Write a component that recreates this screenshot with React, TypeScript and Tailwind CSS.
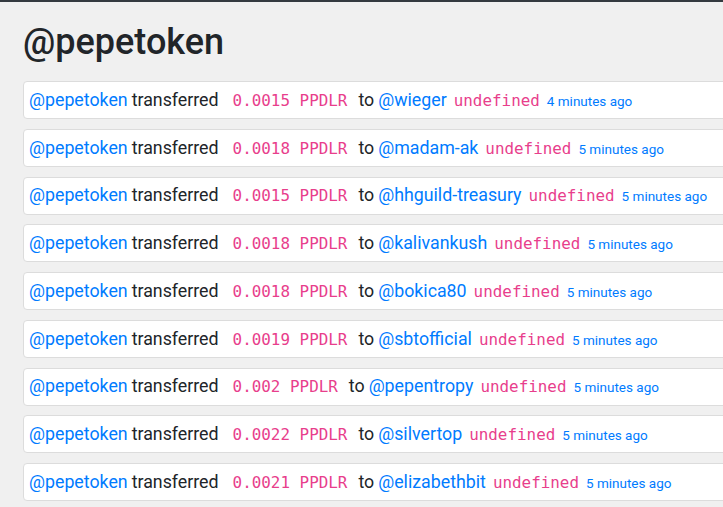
const rows = [
  { amount: "0.0015 PPDLR", to: "@wieger", time: "4 minutes ago" },
  { amount: "0.0018 PPDLR", to: "@madam-ak", time: "5 minutes ago" },
  { amount: "0.0015 PPDLR", to: "@hhguild-treasury", time: "5 minutes ago" },
  { amount: "0.0018 PPDLR", to: "@kalivankush", time: "5 minutes ago" },
  { amount: "0.0018 PPDLR", to: "@bokica80", time: "5 minutes ago" },
  { amount: "0.0019 PPDLR", to: "@sbtofficial", time: "5 minutes ago" },
  { amount: "0.002 PPDLR", to: "@pepentropy", time: "5 minutes ago" },
  { amount: "0.0022 PPDLR", to: "@silvertop", time: "5 minutes ago" },
  { amount: "0.0021 PPDLR", to: "@elizabethbit", time: "5 minutes ago" },
];

const mono = "font-['DejaVu_Sans_Mono',monospace] text-[15.9px] text-[#e83e8c]";

export default function App() {
  return (
    <div className="h-[507px] w-full overflow-hidden bg-[#f0f0f0] font-['Roboto',sans-serif] text-[#212529]">
      <div className="h-[2px] bg-[#343a40]" />
      <div className="pl-[23px] pt-[19px]">
        <h1 className="mb-[17px] text-[36px] font-medium leading-[1.2]">@pepetoken</h1>
        <div className="flex flex-col gap-[9.75px]">
          {rows.map((r, i) => (
            <div
              key={i}
              className="flex h-[38px] w-[760px] shrink-0 items-center rounded-[4px] border border-[#dcdcdc] bg-white pl-[5px]"
            >
              <div className="flex items-baseline whitespace-nowrap text-[17.8px] leading-normal">
                <a className="text-[#007bff]">@pepetoken</a>
                <span className="ml-[4px]">transferred</span>
                <code className={`ml-[14px] ${mono}`}>{r.amount}</code>
                <span className="ml-[11px]">to</span>
                <a className="ml-[4px] text-[#007bff]">{r.to}</a>
                <code className={`ml-[7px] ${mono}`}>undefined</code>
                <small className="ml-[7px] text-[13.5px] text-[#007bff]">{r.time}</small>
              </div>
            </div>
          ))}
        </div>
      </div>
    </div>
  );
}
